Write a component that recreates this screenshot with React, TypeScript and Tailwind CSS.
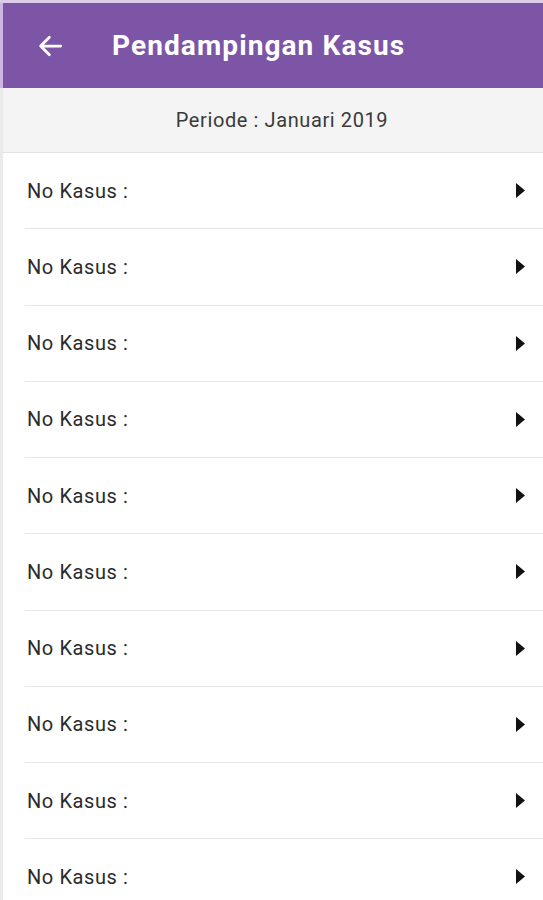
import React from "react";

const rows = Array.from({ length: 10 }, (_, i) => i);

function BackArrow() {
  return (
    <svg width="30" height="30" viewBox="0 0 24 24" fill="none">
      <path
        d="M20.5 12H4.5M11.5 5 4.5 12l7 7"
        stroke="white"
        strokeWidth="2.2"
        strokeLinecap="round"
        strokeLinejoin="round"
      />
    </svg>
  );
}

function Caret() {
  return (
    <svg width="11" height="17" viewBox="0 0 11 17">
      <path d="M1 1l9 7.5-9 7.5z" fill="#111" />
    </svg>
  );
}

export default function App() {
  return (
    <div
      className="min-h-[900px] w-[543px] overflow-hidden bg-white"
      style={{ fontFamily: "Roboto, 'Noto Sans', sans-serif" }}
    >
      <div className="h-[3px] bg-[#dccbe9]" />
      {/* Header */}
      <div className="flex h-[85px] items-center border-l-[3px] border-[#cdb6e3] bg-[#7d55a7]">
        <div className="ml-[32px] flex w-[77px] items-center">
          <BackArrow />
        </div>
        <h1 className="text-[28px] font-bold tracking-[1.1px] text-white">
          Pendampingan Kasus
        </h1>
      </div>
      <div className="border-l-[3px] border-[#ebebeb]">
        {/* Periode */}
        <div className="flex h-[65px] items-center justify-center border-b border-[#e3e3e3] bg-[#f4f4f4] pl-[18px]">
          <span className="text-[20px] tracking-[0.6px] text-[#3a3a3a]">
            Periode : Januari 2019
          </span>
        </div>
        {/* List */}
        <div className="ml-[22px]">
          {rows.map((i) => (
            <div
              key={i}
              className="flex h-[76.25px] items-center justify-between border-b border-[#e6e6e6] pl-[2px] pr-[17px]"
            >
              <span className="text-[20px] tracking-[0.6px] text-[#2b2b2b]">
                No Kasus :
              </span>
              <Caret />
            </div>
          ))}
        </div>
      </div>
    </div>
  );
}
